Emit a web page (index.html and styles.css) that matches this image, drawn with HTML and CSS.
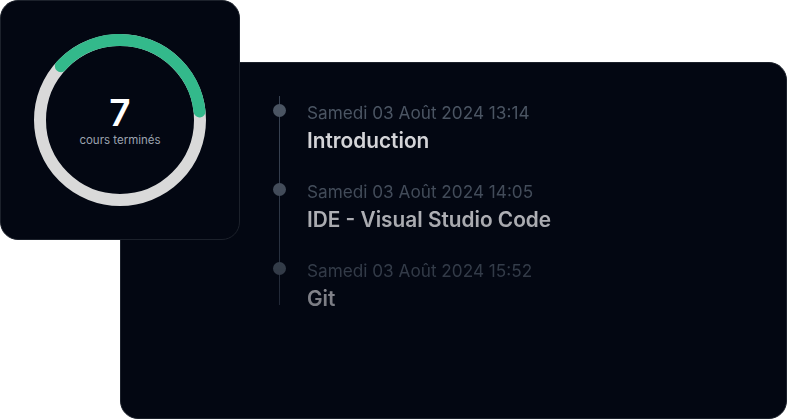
FILE: index.html
```html
<!DOCTYPE html>
<html lang="fr">
  <head>
    <meta charset="UTF-8" />
    <meta name="viewport" content="width=device-width, initial-scale=1.0" />
    <title>Progression</title>
    <link rel="stylesheet" href="styles.css">
  </head>
  <body>
    <div class="scene">
      <!-- Completed courses counter -->
      <div class="stat-card">
        <svg class="ring" width="172" height="172" viewBox="0 0 172 172">
          <circle cx="86" cy="86" r="80" fill="none" stroke="#d9d9d9" stroke-width="12" />
          <circle cx="86" cy="86" r="80" fill="none" stroke="#33b98b" stroke-width="12"
            stroke-linecap="round" stroke-dasharray="183.4 502.65"
            transform="rotate(-137.7 86 86)" />
        </svg>
        <div class="stat-text">
          <span class="stat-value">7</span>
          <span class="stat-label">cours terminés</span>
        </div>
      </div>

      <!-- History timeline -->
      <div class="history-card">
        <ul class="timeline">
          <li class="timeline-item">
            <span class="dot"></span>
            <div class="date">Samedi 03 Août 2024 13:14</div>
            <div class="title">Introduction</div>
          </li>
          <li class="timeline-item">
            <span class="dot"></span>
            <div class="date">Samedi 03 Août 2024 14:05</div>
            <div class="title">IDE - Visual Studio Code</div>
          </li>
          <li class="timeline-item">
            <span class="dot"></span>
            <div class="date">Samedi 03 Août 2024 15:52</div>
            <div class="title">Git</div>
          </li>
        </ul>
      </div>
    </div>
  </body>
</html>
```

FILE: styles.css
```css
* {
  margin: 0;
  padding: 0;
  box-sizing: border-box;
}

body {
  font-family: Inter, "Liberation Sans", sans-serif;
  background: #ffffff;
  overflow: hidden;
}

.scene {
  position: relative;
  width: 787px;
  height: 419px;
  padding: 62px 0 0 120px;
}

/* big card */
.history-card {
  width: 667px;
  height: 357px;
  background: #030712;
  border: 1px solid #1c212b;
  border-radius: 18px;
  padding: 33px 0 0 148px;
}

.timeline {
  list-style: none;
  position: relative;
  display: flex;
  flex-direction: column;
  gap: 23px;
  padding: 4px 0 0 10px;
  -webkit-mask-image: linear-gradient(to bottom, #000 25%, rgba(0, 0, 0, 0.55) 100%);
  mask-image: linear-gradient(to bottom, #000 25%, rgba(0, 0, 0, 0.55) 100%);
}

.timeline::before {
  content: "";
  position: absolute;
  left: 10px;
  top: 0;
  bottom: 9px;
  width: 1px;
  background: #374151;
}

.timeline-item {
  position: relative;
  padding-left: 28px;
}

.dot {
  position: absolute;
  left: -6px;
  top: 4px;
  width: 13px;
  height: 13px;
  border-radius: 50%;
  background: #4b5563;
}

.date {
  font-size: 17.2px;
  line-height: 26px;
  color: #4b5563;
}

.title {
  font-size: 20.8px;
  line-height: 30px;
  font-weight: 600;
  color: #d4d4d8;
}

/* small card */
.stat-card {
  position: absolute;
  left: 0;
  top: 0;
  width: 240px;
  height: 240px;
  background: #030712;
  border: 1px solid #1c212b;
  border-radius: 18px;
  display: flex;
  align-items: center;
  justify-content: center;
}

.ring {
  position: absolute;
  left: 33px;
  top: 33px;
}

.stat-text {
  display: flex;
  flex-direction: column;
  align-items: center;
  margin-top: -1px;
}

.stat-value {
  font-size: 37px;
  line-height: 40px;
  font-weight: 600;
  color: #ffffff;
}

.stat-label {
  font-size: 11.5px;
  line-height: 14px;
  color: #9ca3af;
}
```
